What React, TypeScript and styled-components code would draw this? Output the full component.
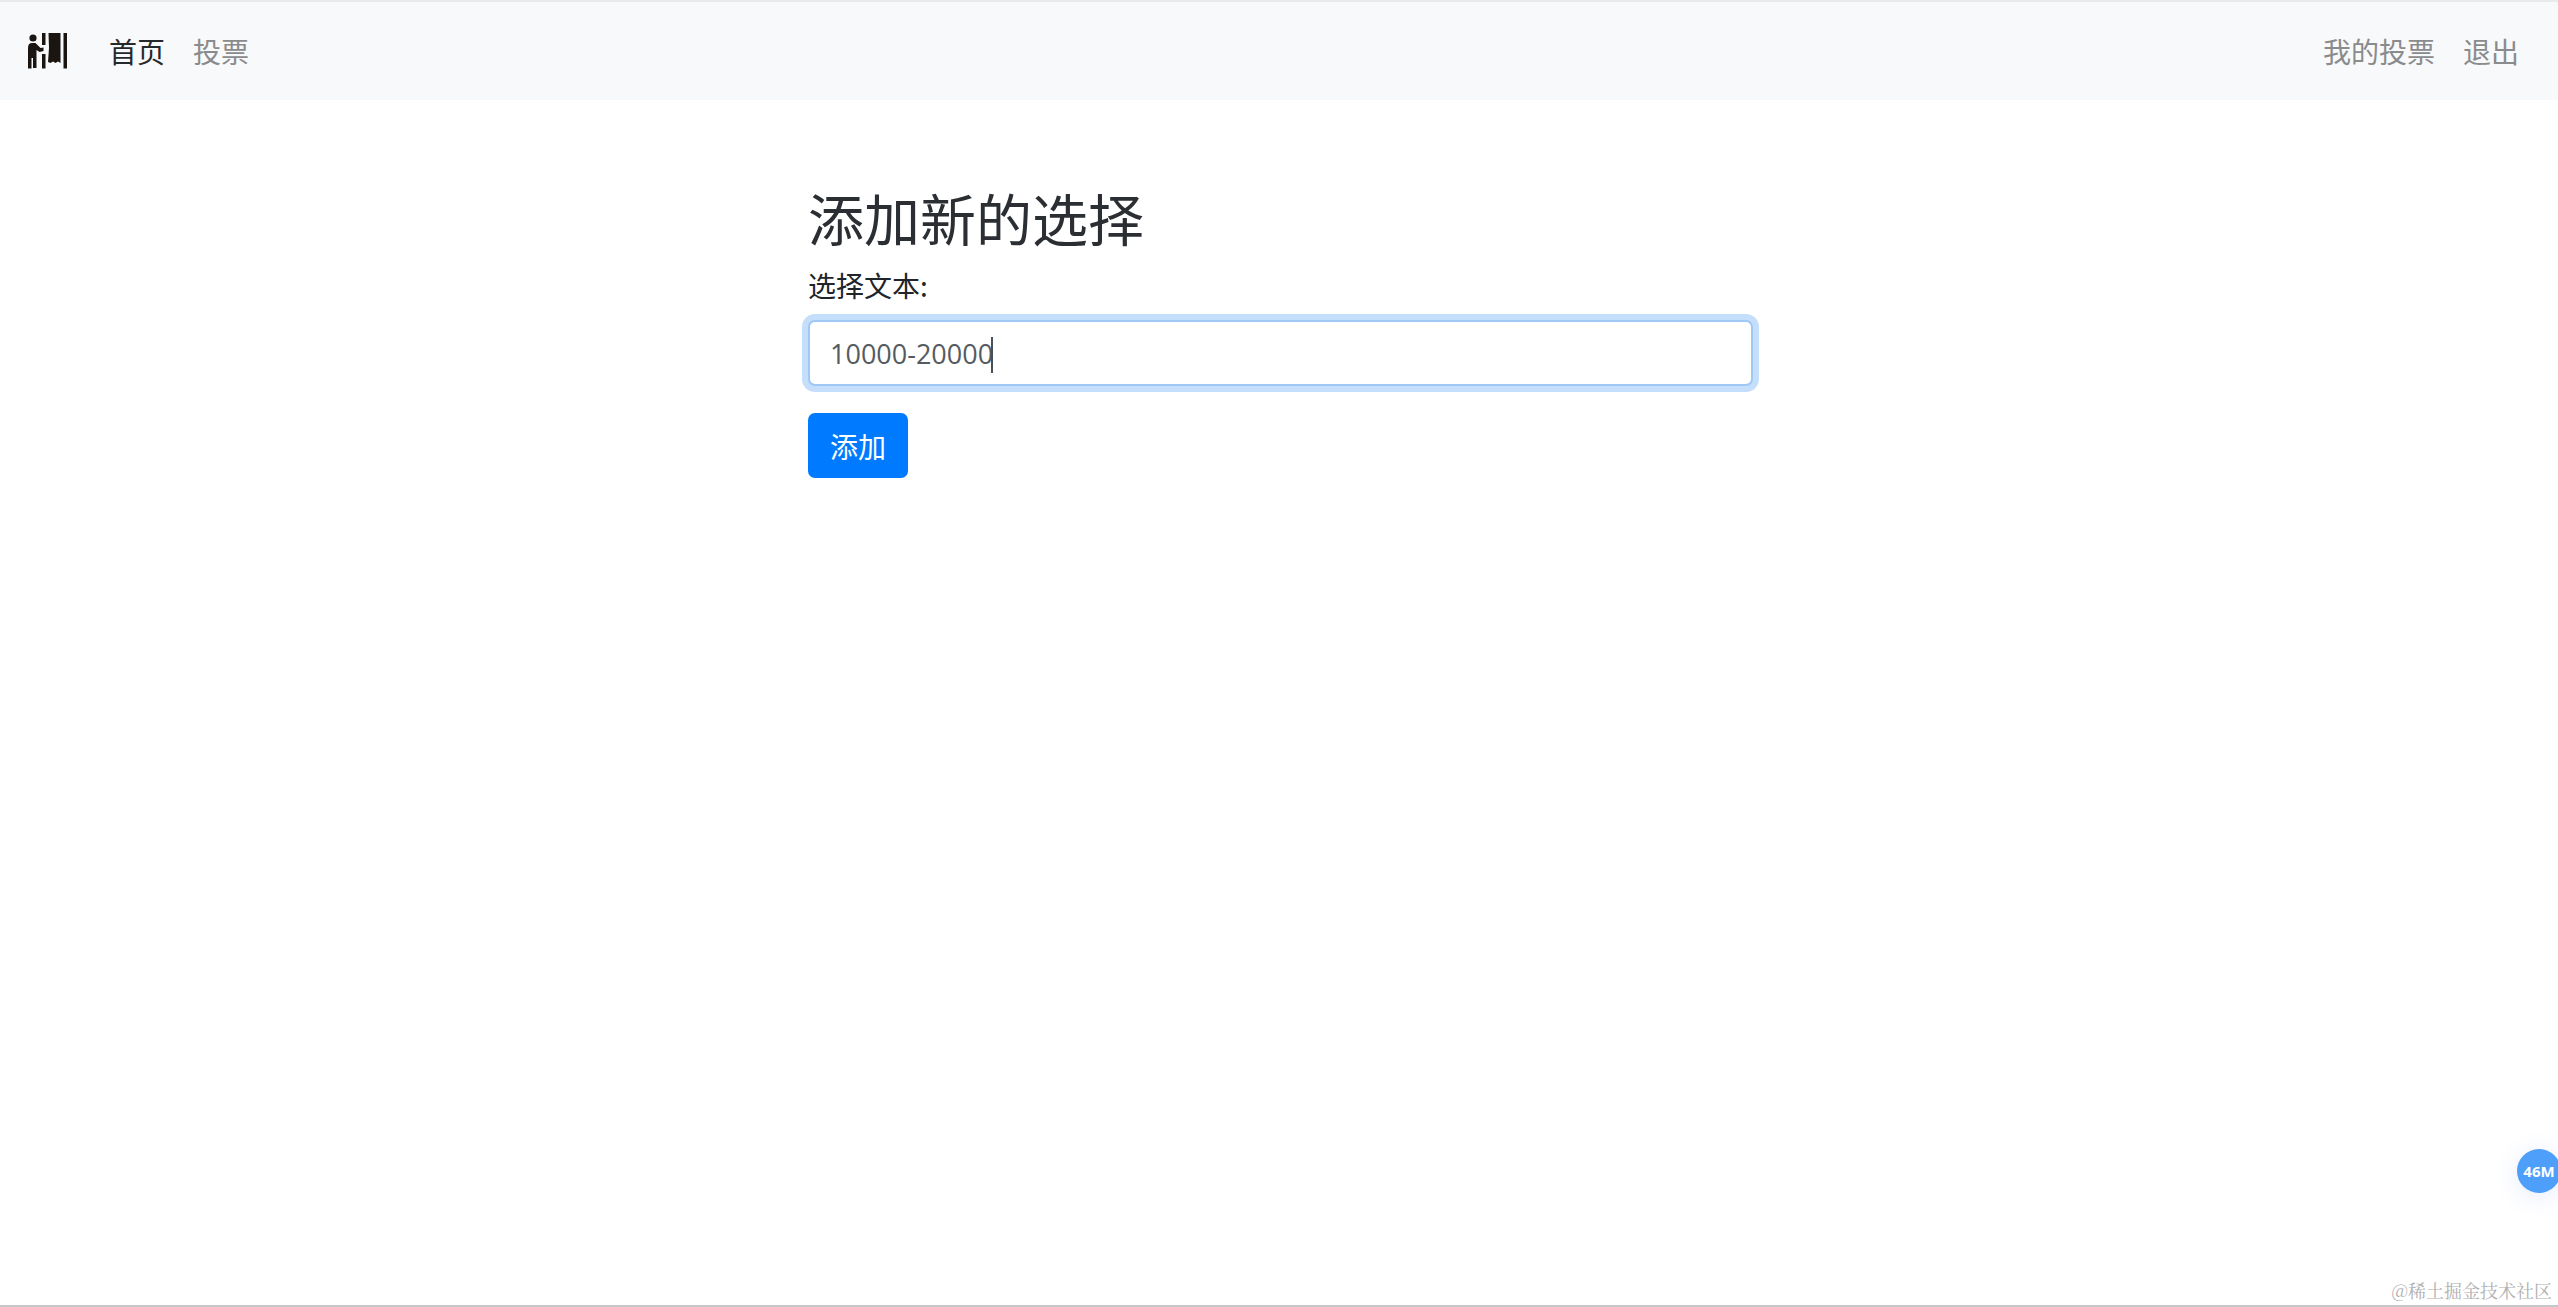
import React from "react";
import styled, { createGlobalStyle } from "styled-components";

const GlobalStyle = createGlobalStyle`
  html, body { margin: 0; padding: 0; background: #fff; }
  body {
    font-family: "Open Sans", "Noto Sans CJK SC", sans-serif;
    color: #212529;
    overflow: hidden;
  }
`;

const Page = styled.div`
  position: relative;
  height: 1307px;
  box-sizing: border-box;
  border-top: 2px solid #e9eaec;
  border-bottom: 2px solid #c4c8cb;
  overflow: hidden;
`;

const NavBar = styled.nav`
  display: flex;
  align-items: center;
  justify-content: space-between;
  height: 98px;
  padding: 0 39px 0 28px;
  background: #f8f9fa;
`;

const NavGroup = styled.div`
  display: flex;
  align-items: center;
`;

const LinkRow = styled.div`
  display: flex;
  gap: 28px;
`;

const NavLink = styled.a<{ $active?: boolean }>`
  font-family: "Noto Sans CJK SC", sans-serif;
  font-size: 28px;
  font-weight: 400;
  line-height: 40px;
  color: ${(p) => (p.$active ? "#26292c" : "#8a8b8c")};
  text-decoration: none;
`;

const Logo = styled.svg`
  display: block;
  width: 40px;
  height: 36px;
  margin-right: 41px;
`;

const Main = styled.main`
  width: 945px;
  margin-left: 808px;
  padding-top: 75px;
`;

const Title = styled.h1`
  margin: 0 0 5px;
  font-family: "Noto Sans CJK SC", sans-serif;
  font-size: 56px;
  font-weight: 400;
  line-height: 84px;
  color: #2b2f33;
`;

const Label = styled.label`
  display: block;
  margin-bottom: 14px;
  font-family: "Noto Sans CJK SC", sans-serif;
  font-size: 28px;
  font-weight: 400;
  line-height: 42px;
  color: #212529;
`;

const InputWrap = styled.div`
  position: relative;
  margin-bottom: 27px;
`;

const TextInput = styled.input`
  display: block;
  width: 100%;
  height: 66px;
  box-sizing: border-box;
  padding: 0 20px;
  font-family: "Open Sans", "Noto Sans CJK SC", sans-serif;
  font-size: 27px;
  color: #555b61;
  background: #fff;
  border: 2px solid #9fc8f5;
  border-radius: 7px;
  outline: none;
  box-shadow: 0 0 0 6px #c5defb;
`;

const Caret = styled.span`
  position: absolute;
  left: 183px;
  top: 17px;
  width: 2px;
  height: 36px;
  background: #495057;
`;

const Button = styled.button`
  display: block;
  width: 100px;
  height: 65px;
  padding: 0;
  font-family: "Noto Sans CJK SC", sans-serif;
  font-size: 28px;
  font-weight: 400;
  color: #fff;
  background: #007bff;
  border: none;
  border-radius: 7px;
`;

const Badge = styled.div`
  position: absolute;
  left: 2517px;
  top: 1147px;
  width: 44px;
  height: 44px;
  display: flex;
  align-items: center;
  justify-content: center;
  border-radius: 50%;
  background: #4d9ffa;
  color: #fff;
  font-family: "Open Sans", sans-serif;
  font-size: 15px;
  font-weight: 700;
  box-shadow: 0 4px 24px rgba(77, 120, 250, 0.14);
`;

const Watermark = styled.div`
  position: absolute;
  right: 6px;
  bottom: 3px;
  font-family: "Noto Serif CJK SC", "Noto Sans CJK SC", sans-serif;
  font-size: 18px;
  font-weight: 400;
  line-height: 24px;
  color: #b0b0b0;
`;

export default function App() {
  return (
    <>
      <GlobalStyle />
      <Page>
        <NavBar>
          <NavGroup>
            <Logo viewBox="0 0 40 36" aria-hidden="true">
              <circle cx="5" cy="5" r="3.600" fill="#1b1512" />
              <path d="M0 15q0-5 4-5h3.500l5 5 3-.5v3.500l-4 1-3-2v18H5V25H3.500v10.500H0z" fill="#1b1512" />
              <rect x="14" y="0" width="3.500" height="12" fill="#1b1512" />
              <rect x="14" y="21" width="3.500" height="14.500" fill="#1b1512" />
              <path d="M20.500 0h12v30l-2.500-1.500-2.500 1.500-2.500-1.500-2.500 1.500-2.500-1 1-14z" fill="#1b1512" />
              <rect x="35.500" y="0" width="3.500" height="35.500" fill="#1b1512" />
            </Logo>
            <LinkRow>
              <NavLink $active>首页</NavLink>
              <NavLink>投票</NavLink>
            </LinkRow>
          </NavGroup>
          <LinkRow>
            <NavLink>我的投票</NavLink>
            <NavLink>退出</NavLink>
          </LinkRow>
        </NavBar>
        <Main>
          <Title>添加新的选择</Title>
          <Label>选择文本:</Label>
          <InputWrap>
            <TextInput readOnly value="10000-20000" />
            <Caret />
          </InputWrap>
          <Button>添加</Button>
        </Main>
        <Badge>46M</Badge>
        <Watermark>@稀土掘金技术社区</Watermark>
      </Page>
    </>
  );
}
